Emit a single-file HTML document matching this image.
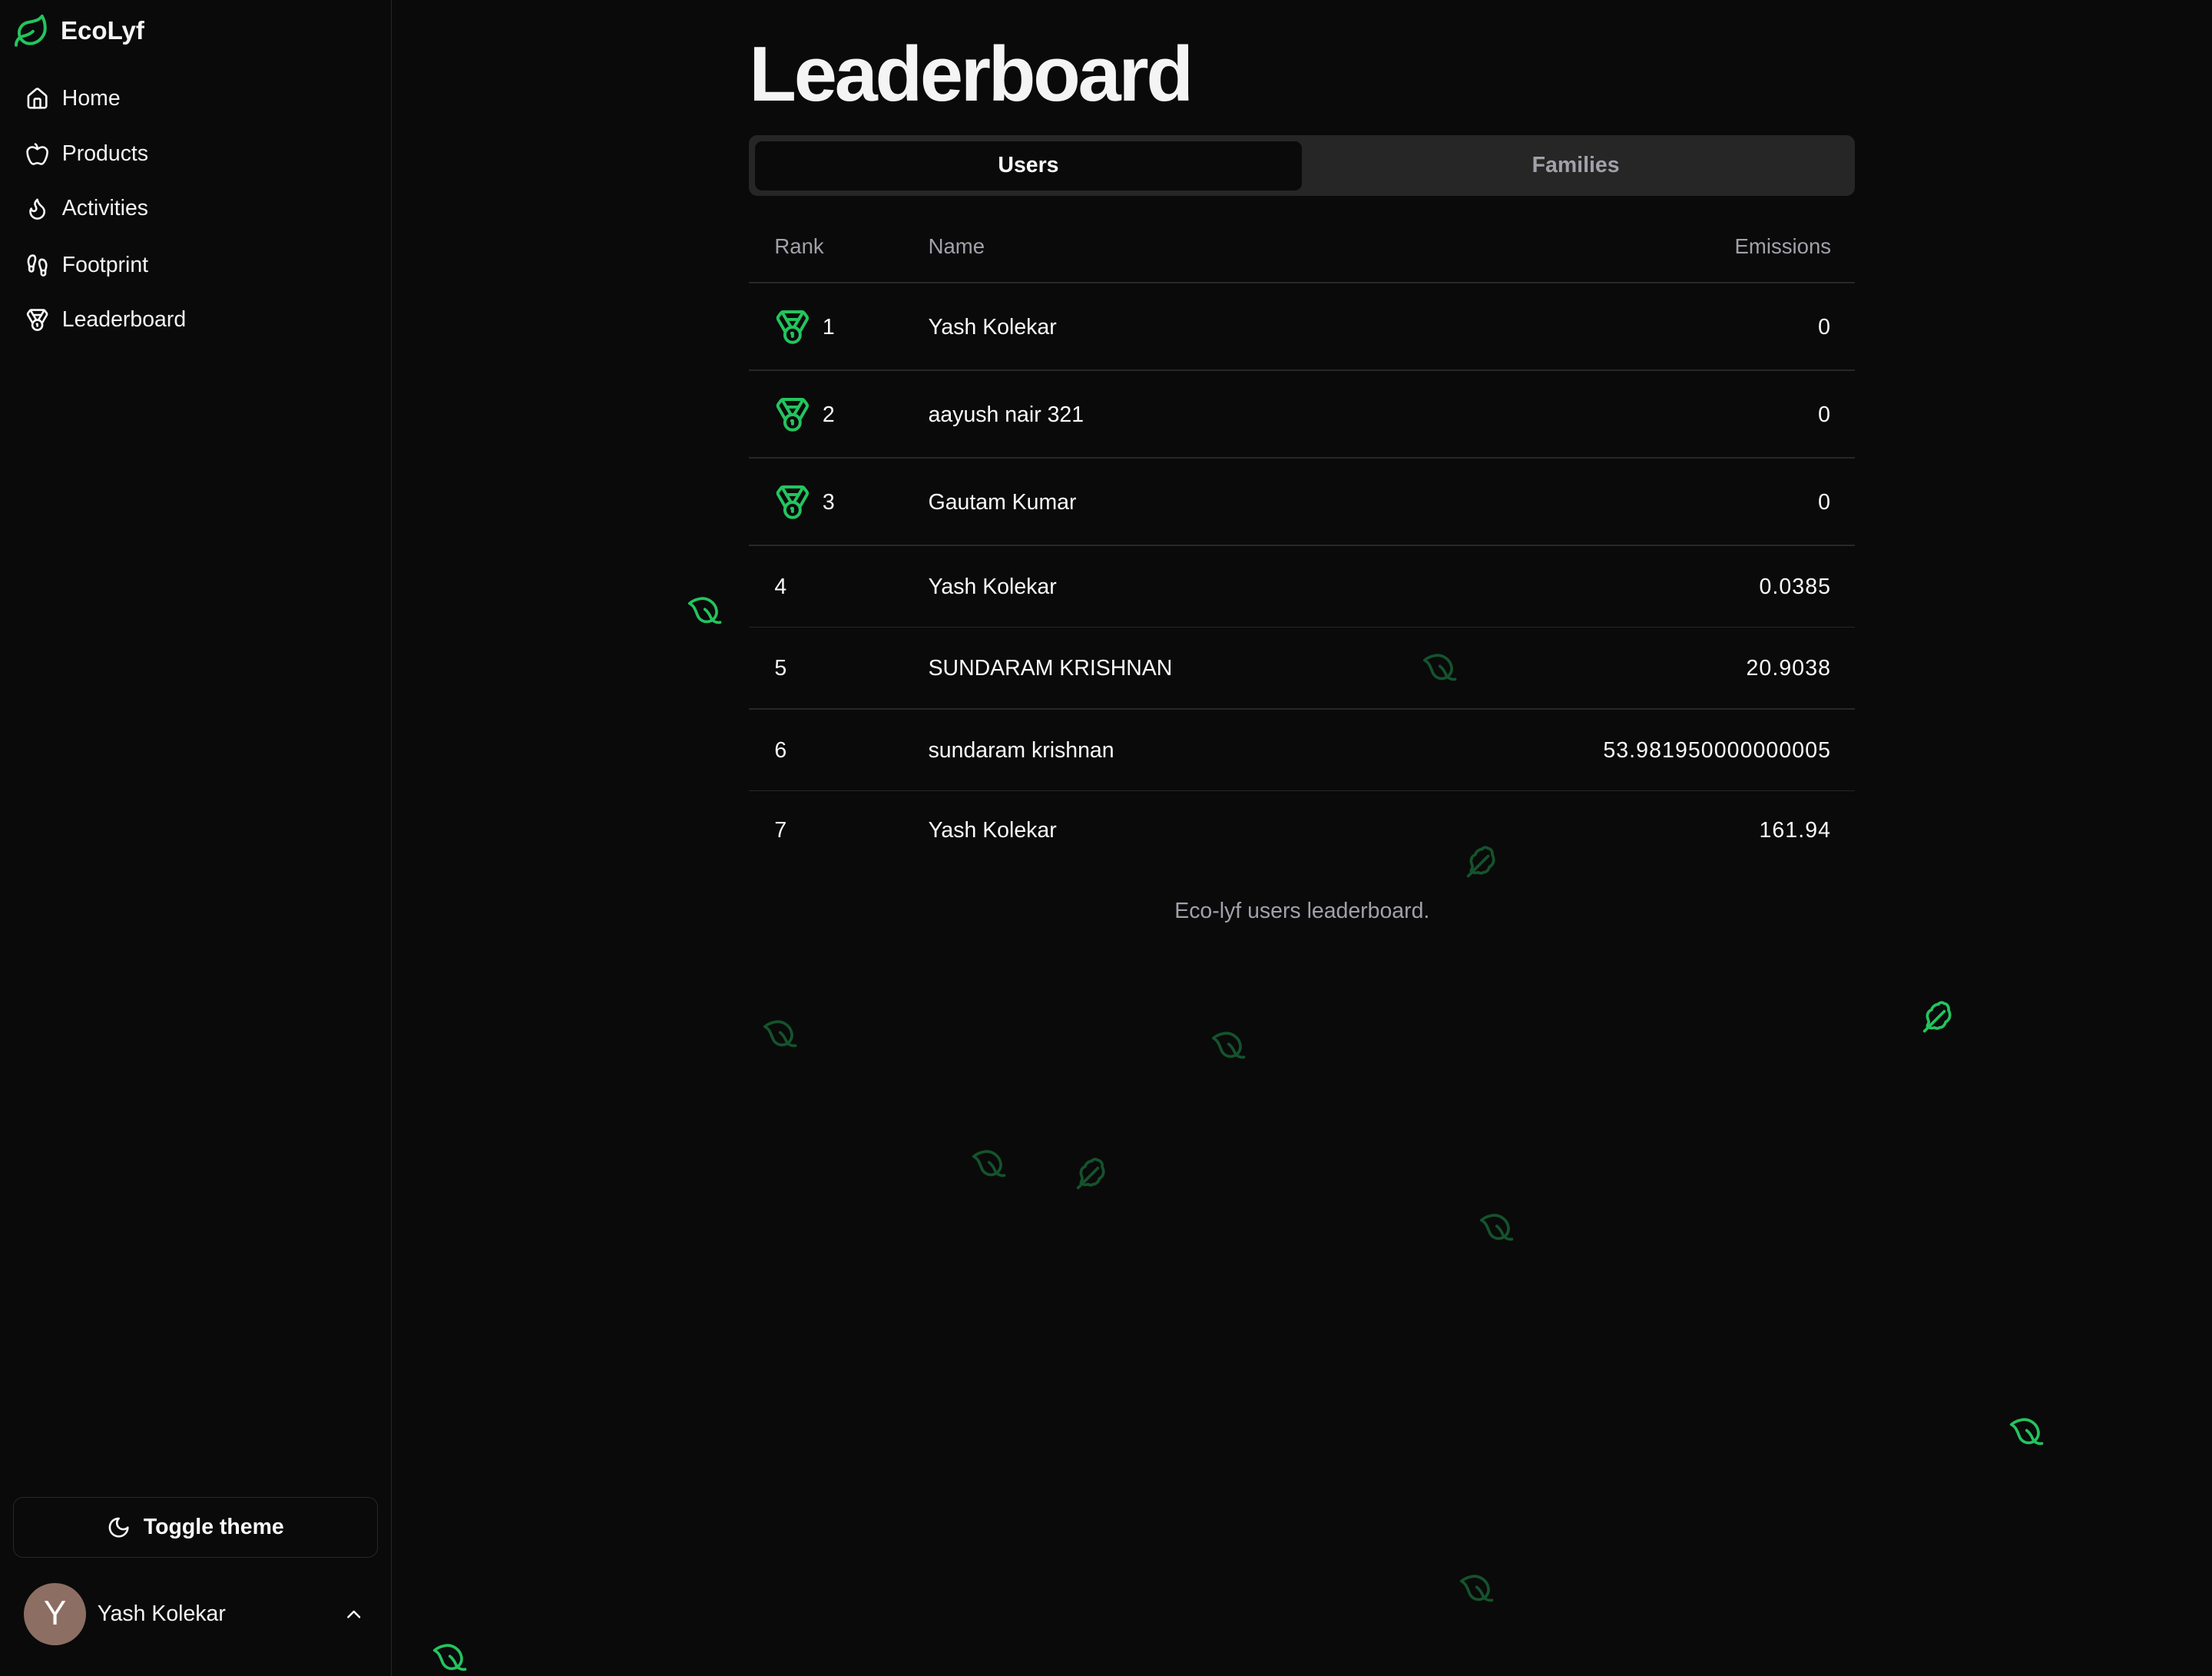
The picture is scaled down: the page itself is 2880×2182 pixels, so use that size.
<!DOCTYPE html>
<html><head><meta charset="utf-8">
<style>
html,body{margin:0;padding:0;background:#0a0a0a;overflow:hidden}
html{zoom:1.83673}
body{width:1568px;height:1188px;position:relative;font-family:"Liberation Sans",sans-serif;color:#fafafa}
.abs{position:absolute}
.side{position:absolute;left:0;top:0;width:277px;height:1188px;border-right:1px solid #27272a;background:#0a0a0a}
.nav{position:absolute;left:18px;font-size:15.5px;display:flex;align-items:center;gap:9px;color:#f4f4f5}
.nav svg{width:17px;height:17px}
.t{position:absolute;font-size:15.5px;color:#fafafa;line-height:20px}
.e{letter-spacing:0.6px}
.h{position:absolute;font-size:15px;color:#a1a1aa;line-height:20px}
.line{position:absolute;left:531px;width:784px;height:1px;background:#27272a}
.leaf{position:absolute;width:24px;height:24px}
</style></head><body>
<div class="side">
  <svg class="abs" style="left:9px;top:9px;width:26px;height:26px" viewBox="0 0 24 24" fill="none" stroke="#22c55e" stroke-width="2" stroke-linecap="round" stroke-linejoin="round"><path d="M11 20A7 7 0 0 1 9.8 6.1C15.5 5 17 4.48 19 2c1 2 2 4.18 2 8 0 5.5-4.78 10-10 10Z"/><path d="M2 21c0-3 1.85-5.36 5.08-6C9.5 14.52 12 13 13 12"/></svg>
  <div class="abs" style="left:43px;top:12px;font-size:18px;font-weight:bold;color:#f4f4f5">EcoLyf</div>
  <div class="nav" style="top:61px"><svg viewBox="0 0 24 24" fill="none" stroke="#fafafa" stroke-width="2" stroke-linecap="round" stroke-linejoin="round"><path d="M15 21v-8a1 1 0 0 0-1-1h-4a1 1 0 0 0-1 1v8"/><path d="M3 10a2 2 0 0 1 .709-1.528l7-5.999a2 2 0 0 1 2.582 0l7 5.999A2 2 0 0 1 21 10v9a2 2 0 0 1-2 2H5a2 2 0 0 1-2-2z"/></svg>Home</div>
  <div class="nav" style="top:100px"><svg viewBox="0 0 24 24" fill="none" stroke="#fafafa" stroke-width="2" stroke-linecap="round" stroke-linejoin="round"><path d="M12 20.94c1.5 0 2.75 1.06 4 1.060 3 0 6-8 6-12.22A4.91 4.91 0 0 0 17 5c-2.22 0-4 1.44-5 2-1-.56-2.78-2-5-2a4.9 4.9 0 0 0-5 4.78C2 14 5 22 8 22c1.25 0 2.5-1.06 4-1.06Z"/><path d="M10 2c1 .5 2 2 2 5"/></svg>Products</div>
  <div class="nav" style="top:139px"><svg viewBox="0 0 24 24" fill="none" stroke="#fafafa" stroke-width="2" stroke-linecap="round" stroke-linejoin="round"><path d="M8.5 14.5A2.5 2.5 0 0 0 11 12c0-1.38-.5-2-1-3-1.072-2.143-.224-4.054 2-6 .5 2.5 2 4.9 4 6.5 2 1.600 3 3.5 3 5.5a7 7 0 1 1-14 0c0-1.153.433-2.294 1-3a2.5 2.5 0 0 0 2.5 2.5z"/></svg>Activities</div>
  <div class="nav" style="top:179px"><svg viewBox="0 0 24 24" fill="none" stroke="#fafafa" stroke-width="2" stroke-linecap="round" stroke-linejoin="round"><path d="M4 16v-2.38C4 11.5 2.97 10.5 3 8c.03-2.72 1.49-6 4.5-6C9.370 2 10 3.8 10 5.5c0 3.11-2 5.66-2 8.68V16a2 2 0 1 1-4 0Z"/><path d="M20 20v-2.38c0-2.12 1.03-3.12 1-5.62-.03-2.72-1.49-6-4.5-6C14.63 6 14 7.8 14 9.5c0 3.11 2 5.66 2 8.68V20a2 2 0 1 0 4 0Z"/><path d="M16 17h4"/><path d="M4 13h4"/></svg>Footprint</div>
  <div class="nav" style="top:218px"><svg viewBox="0 0 24 24" fill="none" stroke="#fafafa" stroke-width="2" stroke-linecap="round" stroke-linejoin="round"><path d="M7.21 15 2.66 7.14a2 2 0 0 1 .13-2.2L4.4 2.8A2 2 0 0 1 6 2h12a2 2 0 0 1 1.6.8l1.6 2.14a2 2 0 0 1 .14 2.2L16.79 15"/><path d="M11 12 5.12 2.2"/><path d="m13 12 5.88-9.8"/><path d="M8 7h8"/><circle cx="12" cy="17" r="5"/><path d="M12 18v-2h-.5"/></svg>Leaderboard</div>

  <div class="abs" style="left:9px;top:1061px;width:258px;height:42px;border:1px solid #27272a;border-radius:7px;display:flex;align-items:center;justify-content:center;gap:9px;font-size:15.5px;font-weight:bold;color:#fafafa">
    <svg width="17" height="17" viewBox="0 0 24 24" fill="none" stroke="#fafafa" stroke-width="2" stroke-linecap="round" stroke-linejoin="round"><path d="M12 3a6 6 0 0 0 9 9 9 9 0 1 1-9-9Z"/></svg>Toggle theme</div>
  <div class="abs" style="left:17px;top:1122px;width:44px;height:44px;border-radius:50%;background:#8d6e63;color:#fff;font-size:24px;display:flex;align-items:center;justify-content:center">Y</div>
  <div class="abs" style="left:69px;top:1135px;font-size:15.5px;color:#f4f4f5">Yash Kolekar</div>
  <svg class="abs" style="left:243px;top:1136px" width="16" height="16" viewBox="0 0 24 24" fill="none" stroke="#fafafa" stroke-width="2" stroke-linecap="round" stroke-linejoin="round"><path d="m18 15-6-6-6 6"/></svg>
</div>

<div class="abs" style="left:531px;top:21px;font-size:55px;font-weight:bold;letter-spacing:-1.8px;color:#f4f4f5;line-height:64px">Leaderboard</div>

<div class="abs" style="left:531px;top:96px;width:784px;height:43px;background:#262626;border-radius:6px"></div>
<div class="abs" style="left:535px;top:100px;width:388px;height:35px;background:#0a0a0a;border-radius:5px;display:flex;align-items:center;justify-content:center;font-size:15.5px;font-weight:bold;color:#fafafa">Users</div>
<div class="abs" style="left:923px;top:100px;width:388px;height:35px;display:flex;align-items:center;justify-content:center;font-size:15.5px;font-weight:bold;color:#a1a1aa">Families</div>

<div class="h" style="left:549px;top:165px">Rank</div>
<div class="h" style="left:658px;top:165px">Name</div>
<div class="h" style="right:270px;top:165px">Emissions</div>
<div class="line" style="top:200px"></div>
<div class="line" style="top:262px"></div>
<div class="line" style="top:324px"></div>
<div class="line" style="top:386px"></div>
<div class="line" style="top:444px"></div>
<div class="line" style="top:502px"></div>
<div class="line" style="top:560px"></div>

<svg class="abs" style="left:549px;top:219px" width="26" height="26" viewBox="0 0 24 24" fill="none" stroke="#22c55e" stroke-width="2" stroke-linecap="round" stroke-linejoin="round"><path d="M7.21 15 2.66 7.140a2 2 0 0 1 .13-2.2L4.4 2.8A2 2 0 0 1 6 2h12a2 2 0 0 1 1.6.8l1.6 2.14a2 2 0 0 1 .14 2.2L16.79 15"/><path d="M11 12 5.12 2.2"/><path d="m13 12 5.88-9.8"/><path d="M8 7h8"/><circle cx="12" cy="17" r="5"/><path d="M12 18v-2h-.5"/></svg>
<svg class="abs" style="left:549px;top:281px" width="26" height="26" viewBox="0 0 24 24" fill="none" stroke="#22c55e" stroke-width="2" stroke-linecap="round" stroke-linejoin="round"><path d="M7.21 15 2.66 7.14a2 2 0 0 1 .13-2.2L4.4 2.8A2 2 0 0 1 6 2h12a2 2 0 0 1 1.6.8l1.6 2.14a2 2 0 0 1 .14 2.2L16.79 15"/><path d="M11 12 5.12 2.2"/><path d="m13 12 5.88-9.8"/><path d="M8 7h8"/><circle cx="12" cy="17" r="5"/><path d="M12 18v-2h-.5"/></svg>
<svg class="abs" style="left:549px;top:343px" width="26" height="26" viewBox="0 0 24 24" fill="none" stroke="#22c55e" stroke-width="2" stroke-linecap="round" stroke-linejoin="round"><path d="M7.21 15 2.66 7.14a2 2 0 0 1 .13-2.2L4.4 2.8A2 2 0 0 1 6 2h12a2 2 0 0 1 1.6.8l1.6 2.14a2 2 0 0 1 .14 2.2L16.79 15"/><path d="M11 12 5.12 2.2"/><path d="m13 12 5.88-9.8"/><path d="M8 7h8"/><circle cx="12" cy="17" r="5"/><path d="M12 18v-2h-.5"/></svg>

<div class="t" style="left:583px;top:222px">1</div><div class="t" style="left:658px;top:222px">Yash Kolekar</div><div class="t e" style="right:270px;top:222px">0</div>
<div class="t" style="left:583px;top:284px">2</div><div class="t" style="left:658px;top:284px">aayush nair 321</div><div class="t e" style="right:270px;top:284px">0</div>
<div class="t" style="left:583px;top:346px">3</div><div class="t" style="left:658px;top:346px">Gautam Kumar</div><div class="t e" style="right:270px;top:346px">0</div>
<div class="t" style="left:549px;top:406px">4</div><div class="t" style="left:658px;top:406px">Yash Kolekar</div><div class="t e" style="right:270px;top:406px">0.0385</div>
<div class="t" style="left:549px;top:464px">5</div><div class="t" style="left:658px;top:464px">SUNDARAM KRISHNAN</div><div class="t e" style="right:270px;top:464px">20.9038</div>
<div class="t" style="left:549px;top:522px">6</div><div class="t" style="left:658px;top:522px">sundaram krishnan</div><div class="t e" style="right:270px;top:522px">53.981950000000005</div>
<div class="t" style="left:549px;top:579px">7</div><div class="t" style="left:658px;top:579px">Yash Kolekar</div><div class="t e" style="right:270px;top:579px">161.94</div>

<div class="h" style="left:531px;width:784px;text-align:center;top:636px;font-size:15.5px">Eco-lyf users leaderboard.</div>

<svg width="0" height="0" style="position:absolute"><defs>
<g id="lf" fill="none" stroke-width="2" stroke-linecap="round" stroke-linejoin="round"><path d="M11 20A7 7 0 0 1 9.8 6.1C15.5 5 17 4.48 19 2c1 2 2 4.18 2 8 0 5.5-4.78 10-10 10Z"/><path d="M2 21c0-3 1.85-5.36 5.08-6C9.5 14.52 12 13 13 12"/></g>
<g id="lg" fill="none" stroke-width="2" stroke-linecap="round" stroke-linejoin="round"><path d="M2 22 16 8"/><path d="M12 3c-2 0-4.5 1.5-5 4-2 .5-3 2.5-3 4.5 0 1.5 1 3 1 4s-1 2-1 3c1.5 1.5 3.5 1.5 5 1 1 .5 2.5 1 3.5 0 2.5 0 4-2 4.5-4 2-1 3-3 3-5 0-1.5-.5-2.5-1-3.5.5-2-1-4.5-3-4.5-1-1-2.5-1-4 0Z"/></g>
</defs></svg>
<svg class="leaf" style="left:488px;top:421px;transform:rotate(-100deg)" viewBox="0 0 24 24" stroke="#22c55e"><use href="#lf"/></svg>
<svg class="leaf" style="left:1009px;top:461px;transform:rotate(-100deg)" viewBox="0 0 24 24" stroke="#14532d"><use href="#lf"/></svg>
<svg class="leaf" style="left:1039px;top:599px" viewBox="0 0 24 24" stroke="#14532d"><use href="#lg"/></svg>
<svg class="leaf" style="left:541px;top:721px;transform:rotate(-100deg)" viewBox="0 0 24 24" stroke="#14532d"><use href="#lf"/></svg>
<svg class="leaf" style="left:859px;top:729px;transform:rotate(-100deg)" viewBox="0 0 24 24" stroke="#14532d"><use href="#lf"/></svg>
<svg class="leaf" style="left:1362px;top:709px" viewBox="0 0 24 24" stroke="#22c55e"><use href="#lg"/></svg>
<svg class="leaf" style="left:689px;top:813px;transform:rotate(-100deg)" viewBox="0 0 24 24" stroke="#14532d"><use href="#lf"/></svg>
<svg class="leaf" style="left:762px;top:820px" viewBox="0 0 24 24" stroke="#14532d"><use href="#lg"/></svg>
<svg class="leaf" style="left:1049px;top:858px;transform:rotate(-100deg)" viewBox="0 0 24 24" stroke="#14532d"><use href="#lf"/></svg>
<svg class="leaf" style="left:1425px;top:1003px;transform:rotate(-100deg)" viewBox="0 0 24 24" stroke="#22c55e"><use href="#lf"/></svg>
<svg class="leaf" style="left:1035px;top:1114px;transform:rotate(-100deg)" viewBox="0 0 24 24" stroke="#14532d"><use href="#lf"/></svg>
<svg class="leaf" style="left:307px;top:1163px;transform:rotate(-100deg)" viewBox="0 0 24 24" stroke="#22c55e"><use href="#lf"/></svg>
</body></html>
